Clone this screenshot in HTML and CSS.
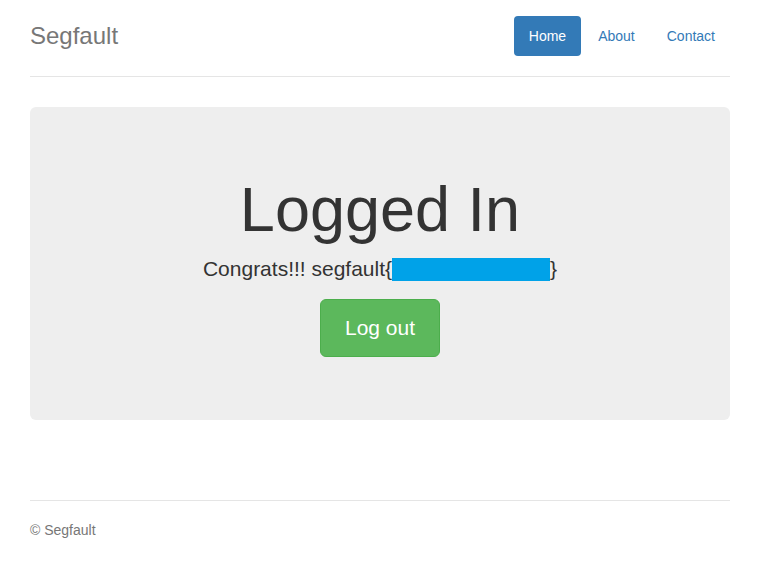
FILE: index.html
```html
<!DOCTYPE html>
<html lang="en">
<head>
<meta charset="utf-8">
<title>Segfault</title>
<link rel="stylesheet" href="styles.css">
</head>
<body>
<div class="container">
  <header class="header">
    <h3 class="brand">Segfault</h3>
    <nav>
      <ul class="nav-pills">
        <li class="active"><a href="#">Home</a></li>
        <li><a href="#">About</a></li>
        <li><a href="#">Contact</a></li>
      </ul>
    </nav>
  </header>

  <div class="jumbotron">
    <h1>Logged In</h1>
    <p class="lead">Congrats!!! segfault{<span class="redact"></span>}</p>
    <p class="actions"><a class="btn-success" href="#">Log out</a></p>
  </div>

  <footer class="footer">
    <p>&copy; Segfault</p>
  </footer>
</div>
</body>
</html>
```

FILE: styles.css
```css
* { box-sizing: border-box; }
html, body { margin: 0; padding: 0; background: #fff; }
body {
  font-family: "Liberation Sans", Arial, Helvetica, sans-serif;
  font-size: 14px;
  line-height: 1.42857143;
  color: #333;
}
.container {
  width: 700px;
  margin: 0 30px;
  padding-top: 16px;
}
.header {
  display: flex;
  justify-content: space-between;
  align-items: flex-start;
  padding-bottom: 20px;
  border-bottom: 1px solid #e5e5e5;
}
.brand {
  margin: 0;
  font-size: 24px;
  font-weight: 500;
  line-height: 40px;
  color: #777;
}
.nav-pills {
  display: flex;
  list-style: none;
  margin: 0;
  padding: 0;
}
.nav-pills li { margin-left: 2px; }
.nav-pills a {
  display: block;
  padding: 10px 15px;
  line-height: 20px;
  color: #337ab7;
  text-decoration: none;
  border-radius: 4px;
}
.nav-pills li.active a {
  background: #337ab7;
  color: #fff;
}
.jumbotron {
  margin-top: 30px;
  padding: 48px 60px;
  background: #eee;
  border-radius: 6px;
  text-align: center;
}
.jumbotron h1 {
  margin: 20px 0 10px;
  font-size: 63px;
  font-weight: 500;
  line-height: 1.1;
  color: #333;
}
.jumbotron p {
  margin: 0 0 15px;
  font-size: 21px;
  font-weight: 200;
  line-height: 30px;
}
.redact {
  display: inline-block;
  width: 158px;
  height: 23px;
  background: #00a2e8;
  vertical-align: -5px;
}
.btn-success {
  display: inline-block;
  padding: 14px 24px;
  font-size: 21px;
  line-height: 28px;
  color: #fff;
  background: #5cb85c;
  border: 1px solid #4cae4c;
  border-radius: 6px;
  text-decoration: none;
  vertical-align: middle;
}
.footer {
  margin-top: 80px;
  padding-top: 19px;
  border-top: 1px solid #e5e5e5;
  color: #777;
}
.footer p { margin: 0 0 10px; }
```
